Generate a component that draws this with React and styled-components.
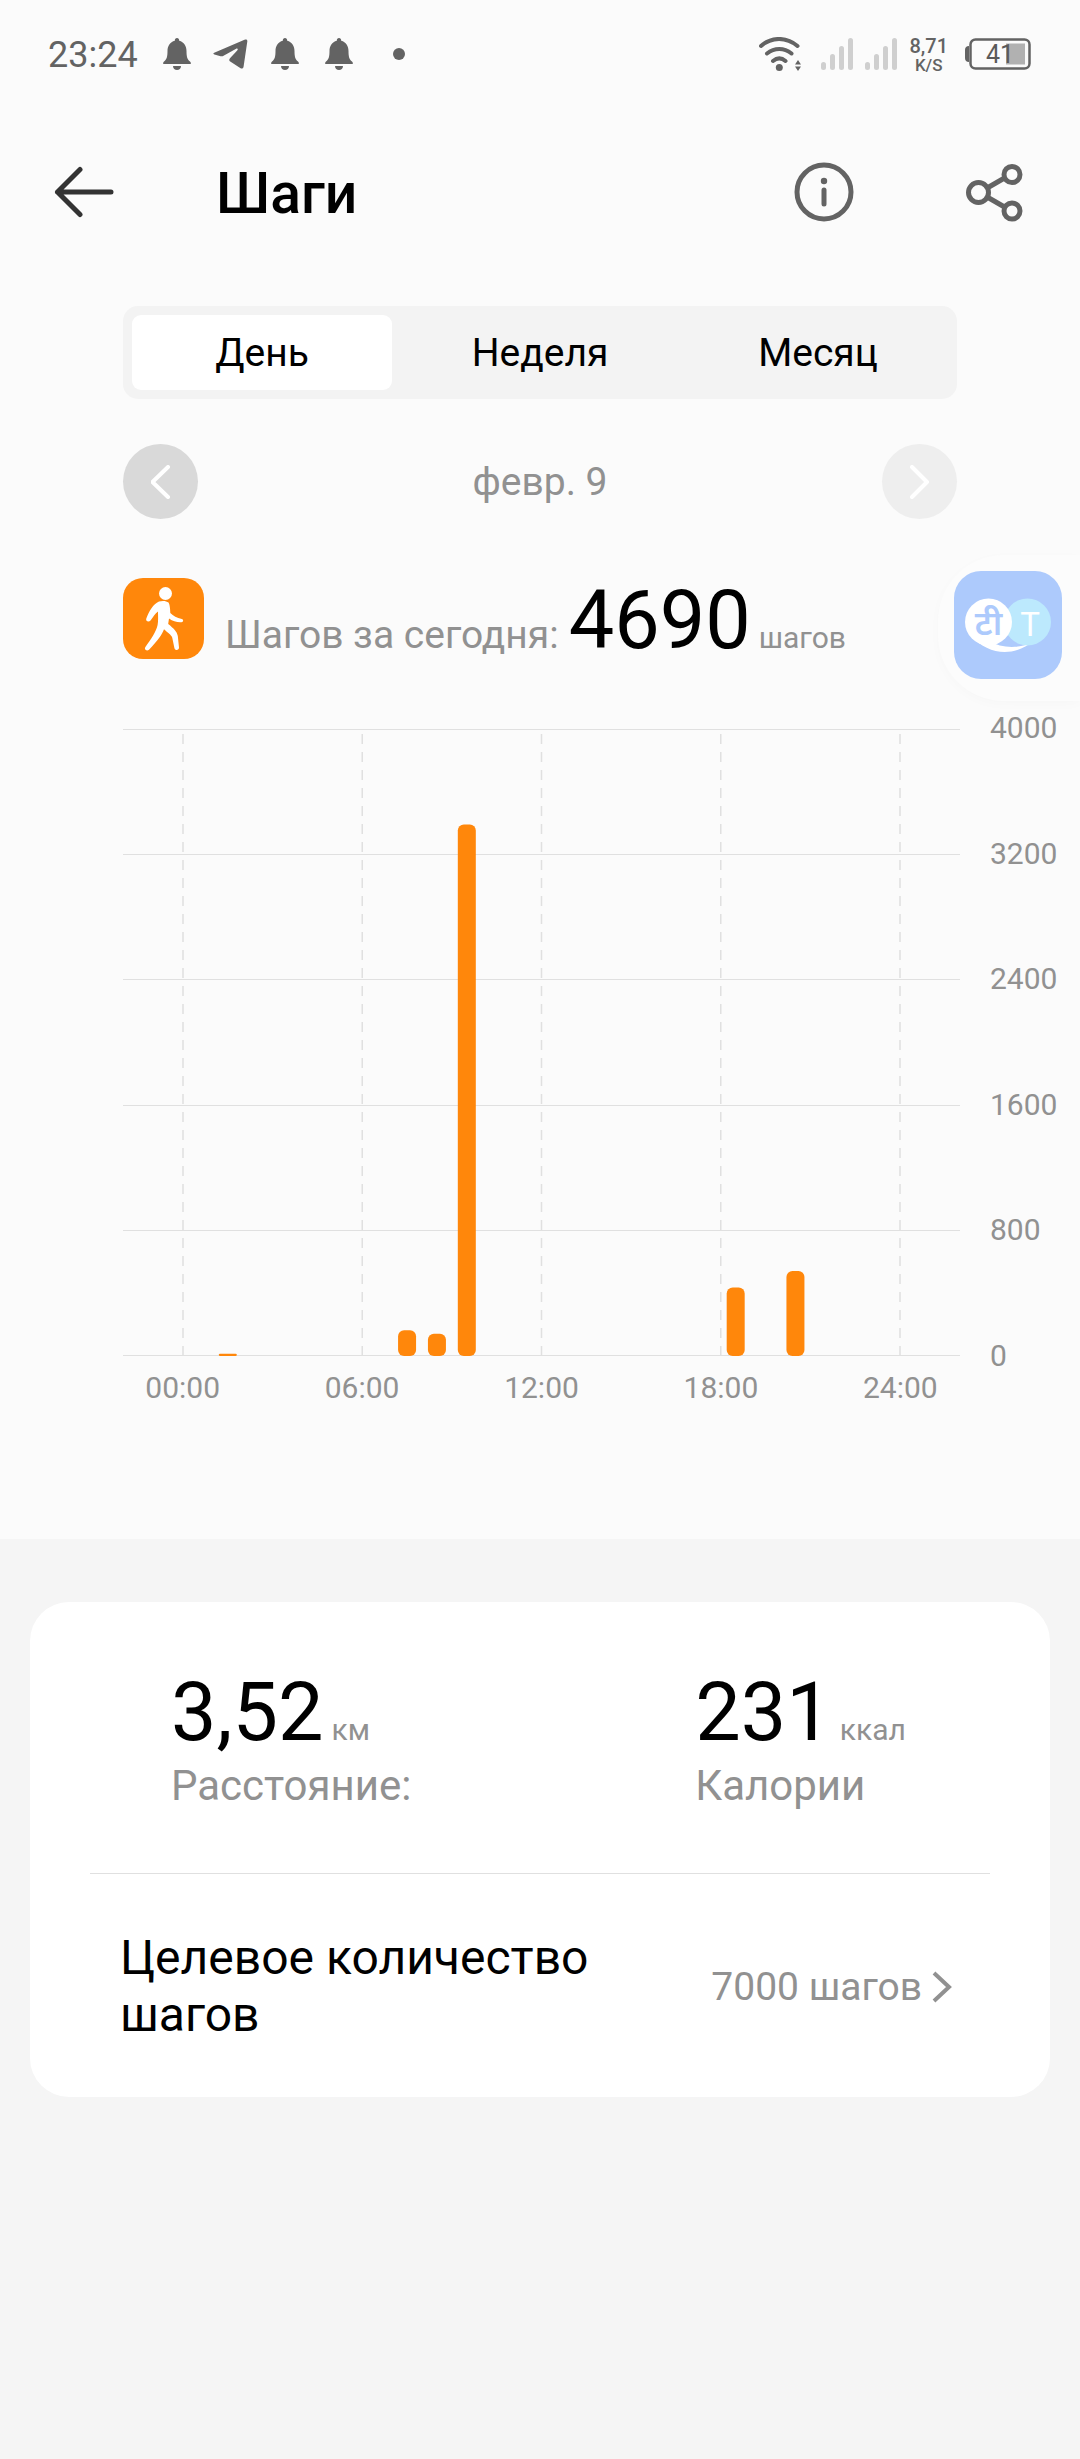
import React, { useState } from "react";
import styled, { createGlobalStyle } from "styled-components";

const GlobalStyle = createGlobalStyle`
  *, *::before, *::after { box-sizing: border-box; }
  html, body { margin: 0; min-height: 100%; background: #f5f5f5; }
  body { font-family: Roboto, "Noto Sans", sans-serif; color: #000; }
  button { margin: 0; padding: 0; border: 0; background: none; font: inherit; color: inherit; cursor: pointer; }
  svg { display: block; flex: none; }
`;

const Page = styled.div`
  position: relative;
  min-height: 100vh;
`;

const Hero = styled.main`
  background: #fbfbfb;
  padding-bottom: 136px;
`;

const StatusBar = styled.div`
  display: flex;
  align-items: center;
  justify-content: space-between;
  height: 108px;
  padding: 0 49px 0 48px;
  color: #636363;
`;

const StatusGroup = styled.div`
  display: flex;
  align-items: center;
  gap: 12px;
`;

const Notifications = styled.div`
  display: grid;
  grid-auto-flow: column;
  grid-auto-columns: 54px;
  place-items: center;
`;

const Clock = styled.span`
  font-size: 36px;
  line-height: 44px;
  padding-top: 2px;
`;

const NetSpeed = styled.span`
  display: flex;
  flex-direction: column;
  align-items: center;
  padding: 4px 5px 0 0;
  font-weight: 500;
  font-size: 20px;
  line-height: 19px;
`;

const NetUnit = styled.span`
  font-size: 17px;
`;

const Header = styled.header`
  display: flex;
  align-items: center;
  height: 168px;
  padding: 0 57px 0 54px;
`;

const Title = styled.h1`
  flex: 1;
  margin: 0 0 0 102px;
  padding-top: 3px;
  font-size: 57px;
  line-height: 66px;
  font-weight: 500;
`;

const HeaderActions = styled.div`
  display: flex;
  align-items: center;
  gap: 112px;
`;

const Content = styled.div`
  padding: 30px 123px 0;
`;

const Tabs = styled.div`
  display: grid;
  grid-template-columns: repeat(3, 1fr);
  gap: 18px;
  height: 93px;
  padding: 9px;
  border-radius: 15px;
  background: #f3f3f3;
`;

const Tab = styled.button`
  border-radius: 9px;
  background: ${(p) => (p.$active ? "#fff" : "transparent")};
  font-size: 39px;
  line-height: 48px;
`;

const DateNav = styled.div`
  display: flex;
  align-items: center;
  justify-content: space-between;
  margin-top: 45px;
  font-size: 39px;
  line-height: 48px;
  color: #919191;
`;

const RoundButton = styled.button`
  display: grid;
  place-items: center;
  width: 75px;
  height: 75px;
  border-radius: 50%;
  background: #d9d9d9;
  color: #fff;
  &:disabled { background: #eee; cursor: default; }
`;

const Summary = styled.div`
  display: flex;
  align-items: flex-start;
  gap: 21px;
  margin-top: 59px;
`;

const SummaryText = styled.p`
  display: flex;
  align-items: baseline;
  margin: 0;
`;

const Caption = styled.span`
  font-size: ${(p) => p.$size}px;
  line-height: 48px;
  color: #919191;
`;

const BigNumber = styled.span`
  font-size: 81px;
  line-height: 86px;
  margin-left: ${(p) => p.$indent || 0}px;
`;

const Unit = styled.span`
  margin-left: 8px;
  font-size: 30px;
  line-height: 36px;
  color: #919191;
`;

const Chart = styled.section`
  display: grid;
  grid-template-columns: minmax(0, 1fr) 90px;
  column-gap: 30px;
  padding: 49px 0 0 123px;
  font-size: 30px;
  line-height: 30px;
  color: #919191;
`;

const Plot = styled.svg`
  width: 100%;
  height: auto;
  margin: 15px 0;
`;

const YAxis = styled.div`
  display: flex;
  flex-direction: column;
  justify-content: space-between;
`;

const XAxis = styled.div`
  display: grid;
  grid-template-columns: repeat(5, 1fr);
  margin: 2px -30px 0;
  text-align: center;
`;

const Details = styled.section`
  padding: 63px 30px;
`;

const Card = styled.div`
  border-radius: 39px;
  background: #fff;
  padding: 68px 60px 54px;
`;

const Stats = styled.div`
  display: grid;
  grid-template-columns: 16fr 9fr;
  padding: 0 0 63px 81px;
  border-bottom: 1px solid #e0e0e0;
`;

const Stat = styled.div`
  display: flex;
  flex-direction: column;
  gap: 6px;
`;

const StatValue = styled.div`
  display: flex;
  align-items: baseline;
`;

const GoalRow = styled.button`
  display: flex;
  align-items: center;
  justify-content: space-between;
  width: 100%;
  padding: 55px 38px 0 30px;
  text-align: left;
`;

const GoalName = styled.span`
  max-width: 500px;
  font-size: 48px;
  line-height: 57px;
`;

const GoalValue = styled.span`
  display: flex;
  align-items: center;
  gap: 10px;
  padding-top: 2px;
  font-size: 39px;
  line-height: 48px;
  color: #919191;
`;

const FloatingTab = styled.aside`
  position: absolute;
  top: 555px;
  right: 0;
  padding: 16px 18px 18px 16px;
  border-radius: 66px 0 0 66px;
  background: #fcfcfc;
  box-shadow: 0 3px 12px rgba(0, 0, 0, 0.02);
`;

const BellIcon = () => (
  <svg width="28" height="32" viewBox="0 0 28 32" fill="currentColor" aria-hidden="true">
    <path d="M14 0c1.400 0 2.200 1 2.200 2.700C21 4 23.500 8 23.500 13c0 6 .8 8.200 3.500 10.600 1.600 1.600 1 2.400-.6 2.400H1.600C0 26-.6 25.200 1 23.600 3.700 21.200 4.500 19 4.500 13 4.500 8 7 4 11.800 2.700 11.800 1 12.600 0 14 0z" />
    <path d="M10 28h8c0 2.400-1.800 4-4 4s-4-1.600-4-4z" />
  </svg>
);

const TelegramIcon = () => (
  <svg width="35" height="30" viewBox="0 0 35 30" fill="currentColor" aria-hidden="true">
    <path d="M1.200 13.800 31.500.7c2-.8 3.100 0 2.800 1.800l-3.700 25c-.3 2-1.600 2.700-3.400 1.600l-9.600-6.400c-1.800-1.200-1.700-2.200-.4-3.600l7-7.700c1.200-1.500.4-2.600-1.500-1.500L11 16.400c-1.400.9-2.700 1.100-4.300.6l-5.300-1.500c-1.300-.5-1.500-1.100-.2-1.700z" />
  </svg>
);

const WifiIcon = () => (
  <svg width="50" height="34" viewBox="0 0 50 34" fill="none" stroke="currentColor" strokeWidth="4" strokeLinecap="round" aria-hidden="true">
    <path d="M2 9C12.500-.4 27.500-.4 38.500 9M8 16.500c7.500-6 17-6 24.500 0M14 24c4-3.400 8.600-3.400 12.500 0" />
    <circle cx="20.300" cy="30.500" r="3.500" fill="currentColor" stroke="none" />
    <path d="M36 27.500h6l-3-4.500zM36 29.500h6l-3 4.500z" fill="currentColor" stroke="none" />
  </svg>
);

const SignalIcon = () => (
  <svg width="32" height="32" viewBox="0 0 32 32" fill="#cfcfcf" aria-hidden="true">
    <rect x="0" y="24" width="5" height="8" rx="2.500" />
    <rect x="9" y="16" width="5" height="16" rx="2.500" />
    <rect x="18" y="8" width="5" height="24" rx="2.500" />
    <rect x="27" y="0" width="5" height="32" rx="2.500" />
  </svg>
);

const BatteryIcon = ({ level }) => (
  <svg width="66" height="32" viewBox="0 0 66 32" role="img" aria-label={`${level}%`}>
    <path d="M4 8v16c-2.600 0-4-1.400-4-4v-8c0-2.600 1.400-4 4-4z" fill="#636363" />
    <rect x="5.500" y="1.500" width="59" height="29" rx="5" fill="none" stroke="#636363" strokeWidth="2.500" />
    <rect x="41" y="5.500" width="19" height="21" fill="#b1b1b1" />
    <text x="21" y="25" fontSize="25" fill="#5a5a5a">{level}</text>
  </svg>
);

const BackIcon = () => (
  <svg width="60" height="52" viewBox="0 0 60 52" fill="none" stroke="#333" strokeWidth="5" strokeLinecap="round" strokeLinejoin="round" aria-hidden="true">
    <path d="M26 3.500 3.500 26 26 48.500M3.500 26H57" />
  </svg>
);

const InfoIcon = () => (
  <svg width="60" height="60" viewBox="0 0 60 60" fill="none" stroke="#636363" aria-hidden="true">
    <circle cx="30" cy="30" r="27" strokeWidth="5" />
    <path d="M30 28v14" strokeWidth="5" strokeLinecap="round" />
    <circle cx="30" cy="19" r="3.200" fill="#636363" stroke="none" />
  </svg>
);

const ShareIcon = () => (
  <svg width="57" height="60" viewBox="0 0 57 60" fill="none" stroke="#636363" strokeWidth="5" aria-hidden="true">
    <circle cx="12.500" cy="30.500" r="10" />
    <circle cx="46" cy="12.500" r="8" />
    <circle cx="46" cy="49" r="8" />
    <path d="m22 25.500 16.500-9.500M22 35.500l16.500 9.500" />
  </svg>
);

const Chevron = ({ width, height, stroke, flip, cap = "round" }) => (
  <svg width={width} height={height} viewBox={`0 0 ${width} ${height}`} fill="none" stroke="currentColor" strokeWidth={stroke} strokeLinecap={cap} strokeLinejoin={cap === "round" ? "round" : "miter"} aria-hidden="true">
    <path
      d={
        flip
          ? `M${width - 3} 2 1.5 ${height / 2} ${width - 3} ${height - 2}`
          : `M2 2 ${width - 3} ${height / 2} 2 ${height - 2}`
      }
    />
  </svg>
);

const WalkIcon = () => (
  <svg width="81" height="81" viewBox="0 0 81 81" aria-hidden="true">
    <rect width="81" height="81" rx="20" fill="#ff870b" />
    <g fill="#fff">
      <circle cx="42.500" cy="15.500" r="6.500" />
      <path d="M36 23.500c3.500-1 7.500-.6 9.500 1 1.200 1.600 1.800 7 1.800 10.500 3 3.200 6.500 4.800 11.500 6 2 .6 1.700 3.200-.3 3.200-5 .2-8.500-1-12.500-3.700l-.8 5.500c5.500 4.500 8.800 7.500 9.600 12l1.200 11.500c.2 3-4 3.500-4.600.4l-2.200-10.400c-.6-2.400-5.200-5.500-8.200-8.300-2 5.300-5.500 10.500-15 20.500-2.300 2-5.200-.2-3.600-2.600C28 61 33 54 34.600 47c.8-4 .4-9 .4-13.500-3 2.300-4.500 5-7.500 9-1.800 2.200-5.200.6-4.200-2 3-7.500 6.700-14.500 12.700-17z" />
    </g>
  </svg>
);

const TranslateIcon = () => (
  <svg width="108" height="108" viewBox="0 0 108 108" role="img" aria-label="Переводчик">
    <rect width="108" height="108" rx="27" fill="#adcafc" />
    <path d="M16 64c20 22 46 22 66 4l-5 4c-14 6-30 5-42-2z" fill="#fff" />
    <circle cx="73.500" cy="51" r="23.500" fill="#bce9fd" />
    <circle cx="34.500" cy="51" r="23.500" fill="#fff" />
    <text x="34.500" y="64" textAnchor="middle" fontSize="34" fontWeight="600" fill="#adcafc" fontFamily="'Noto Sans Devanagari', 'Noto Sans', sans-serif">टी</text>
    <text x="76" y="65" textAnchor="middle" fontSize="33" fill="#fff">T</text>
  </svg>
);

const PERIODS = ["День", "Неделя", "Месяц"];
const Y_TICKS = [4000, 3200, 2400, 1600, 800, 0];
const X_TICKS = [0, 6, 12, 18, 24];
const HOURLY_STEPS = [
  { hour: 1, steps: 15 },
  { hour: 7, steps: 165 },
  { hour: 8, steps: 142 },
  { hour: 9, steps: 3396 },
  { hour: 18, steps: 438 },
  { hour: 20, steps: 543 },
];

const PLOT_W = 837;
const PLOT_H = 628;
const RANGE = 626;
const MAX_STEPS = 4000;
const hourX = (h) => 60 + (h * 717) / 24;

function StepsPlot() {
  return (
    <Plot viewBox={`0 0 ${PLOT_W} ${PLOT_H}`} role="img" aria-label="Шаги по часам">
      {Y_TICKS.map((t) => {
        const y = Math.round(((MAX_STEPS - t) / MAX_STEPS) * RANGE);
        return <rect key={t} x="0" y={y + 1} width={PLOT_W} height="1" fill="#e0e0e0" />;
      })}
      {X_TICKS.map((h) => (
        <line key={h} x1={hourX(h)} x2={hourX(h)} y1={PLOT_H} y2="5" stroke="#e0e0e0" strokeWidth="1.500" strokeDasharray="10 8" />
      ))}
      {HOURLY_STEPS.map(({ hour, steps }) => {
        const h = (steps / MAX_STEPS) * RANGE;
        return (
          <rect key={hour} x={hourX(hour + 0.5) - 9} y={PLOT_H - h} width="18" height={h} rx={Math.min(6, h / 2)} fill="#ff870b" />
        );
      })}
    </Plot>
  );
}

export default function App() {
  const [period, setPeriod] = useState(PERIODS[0]);
  return (
    <Page>
      <GlobalStyle />
      <Hero>
        <StatusBar>
          <StatusGroup>
            <Clock>23:24</Clock>
            <Notifications>
              <BellIcon />
              <TelegramIcon />
              <BellIcon />
              <BellIcon />
              <svg width="24" height="12" viewBox="0 0 24 12" fill="currentColor" aria-hidden="true">
                <circle cx="18" cy="6" r="6" />
              </svg>
            </Notifications>
          </StatusGroup>
          <StatusGroup>
            <WifiIcon />
            <SignalIcon />
            <SignalIcon />
            <NetSpeed>
              <span>8,71</span>
              <NetUnit>K/S</NetUnit>
            </NetSpeed>
            <BatteryIcon level={41} />
          </StatusGroup>
        </StatusBar>

        <Header>
          <button aria-label="Назад"><BackIcon /></button>
          <Title>Шаги</Title>
          <HeaderActions>
            <button aria-label="Информация"><InfoIcon /></button>
            <button aria-label="Поделиться"><ShareIcon /></button>
          </HeaderActions>
        </Header>

        <Content>
          <Tabs role="tablist">
            {PERIODS.map((name) => (
              <Tab key={name} role="tab" aria-selected={name === period} $active={name === period} onClick={() => setPeriod(name)}>
                {name}
              </Tab>
            ))}
          </Tabs>

          <DateNav>
            <RoundButton aria-label="Предыдущий день">
              <Chevron width={20} height={34} stroke={4} flip />
            </RoundButton>
            <span>февр. 9</span>
            <RoundButton aria-label="Следующий день" disabled>
              <Chevron width={20} height={34} stroke={4} />
            </RoundButton>
          </DateNav>

          <Summary>
            <WalkIcon />
            <SummaryText>
              <Caption $size={39}>Шагов за сегодня:</Caption>
              <BigNumber $indent={10}>4690</BigNumber>
              <Unit>шагов</Unit>
            </SummaryText>
          </Summary>
        </Content>

        <Chart>
          <StepsPlot />
          <YAxis>
            {Y_TICKS.map((t) => <span key={t}>{t}</span>)}
          </YAxis>
          <XAxis>
            {X_TICKS.map((h) => <span key={h}>{String(h).padStart(2, "0")}:00</span>)}
          </XAxis>
        </Chart>
      </Hero>

      <Details>
        <Card>
          <Stats>
            <Stat>
              <StatValue><BigNumber>3,52</BigNumber><Unit>км</Unit></StatValue>
              <Caption $size={42}>Расстояние:</Caption>
            </Stat>
            <Stat>
              <StatValue><BigNumber>231</BigNumber><Unit>ккал</Unit></StatValue>
              <Caption $size={42}>Калории</Caption>
            </Stat>
          </Stats>
          <GoalRow>
            <GoalName>Целевое количество шагов</GoalName>
            <GoalValue>
              7000 шагов
              <Chevron width={20} height={32} stroke={4} cap="butt" />
            </GoalValue>
          </GoalRow>
        </Card>
      </Details>

      <FloatingTab>
        <button aria-label="Открыть переводчик"><TranslateIcon /></button>
      </FloatingTab>
    </Page>
  );
}
